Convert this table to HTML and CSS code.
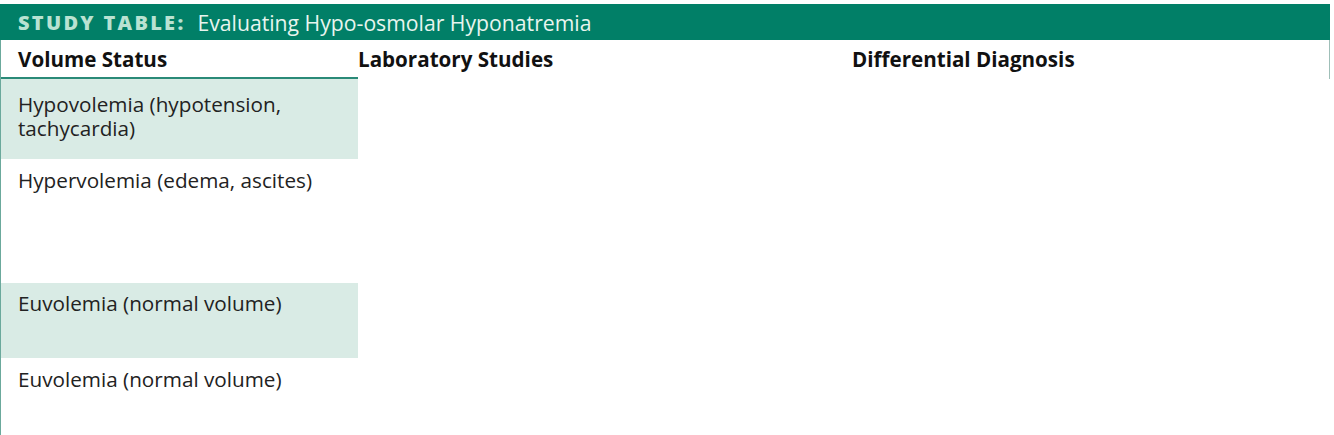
FILE: index.html
```html
<!DOCTYPE html>
<html>
<head>
<meta charset="utf-8">
<link rel="stylesheet" href="styles.css">
</head>
<body>
<div class="study">
  <div class="title"><span class="label">STUDY TABLE:</span><span class="name">Evaluating Hypo-osmolar Hyponatremia</span></div>
  <div class="table">
    <div class="head">
      <div class="hcell first">Volume Status</div>
      <div class="hcell">Laboratory Studies</div>
      <div class="hcell">Differential Diagnosis</div>
    </div>
    <div class="row r1 shade"><div class="cell">Hypovolemia (hypotension,<br>tachycardia)</div><div></div><div></div></div>
    <div class="row r2"><div class="cell">Hypervolemia (edema, ascites)</div><div></div><div></div></div>
    <div class="row r3 shade"><div class="cell">Euvolemia (normal volume)</div><div></div><div></div></div>
    <div class="row r4"><div class="cell">Euvolemia (normal volume)</div><div></div><div></div></div>
  </div>
</div>
</body>
</html>
```
FILE: styles.css
```css
html, body { margin: 0; padding: 0; background: #fff; }
body { font-family: "Open Sans", Lato, sans-serif; color: #1c1c1c; padding-top: 4px; }
.study { width: 1330px; }
.title { background: #017f67; height: 36px; display: flex; align-items: center; padding-left: 18px; box-sizing: border-box; }
.label { font-weight: 800; font-size: 20px; color: #b9e2d2; letter-spacing: 2.3px; margin-right: 12px; }
.name { font-size: 21.2px; color: #e8f5ef; }
.table { border-left: 1px solid #6ba99c; }
.head { display: grid; grid-template-columns: 357px 494px 478px; border-right: 1px solid #9fbfb8; height: 39px; }
.hcell { font-weight: 700; font-size: 20.6px; color: #111; padding-top: 5px; box-sizing: border-box; }
.hcell.first { padding-left: 17px; border-bottom: 2px solid #2a8a78; }
.row { display: grid; grid-template-columns: 357px 494px 479px; }
.cell { font-size: 20.7px; line-height: 24px; padding: 12.5px 17px 0; box-sizing: border-box; color: #222; }
.shade .cell { background: #d9ebe5; }
.r1 { height: 80px; }
.r2 { height: 124px; }
.r2 .cell { padding-top: 8.5px; }
.r3 { height: 75px; }
.r3 .cell { padding-top: 7.5px; }
.r4 { height: 80px; }
.r4 .cell { padding-top: 8.5px; }
```
